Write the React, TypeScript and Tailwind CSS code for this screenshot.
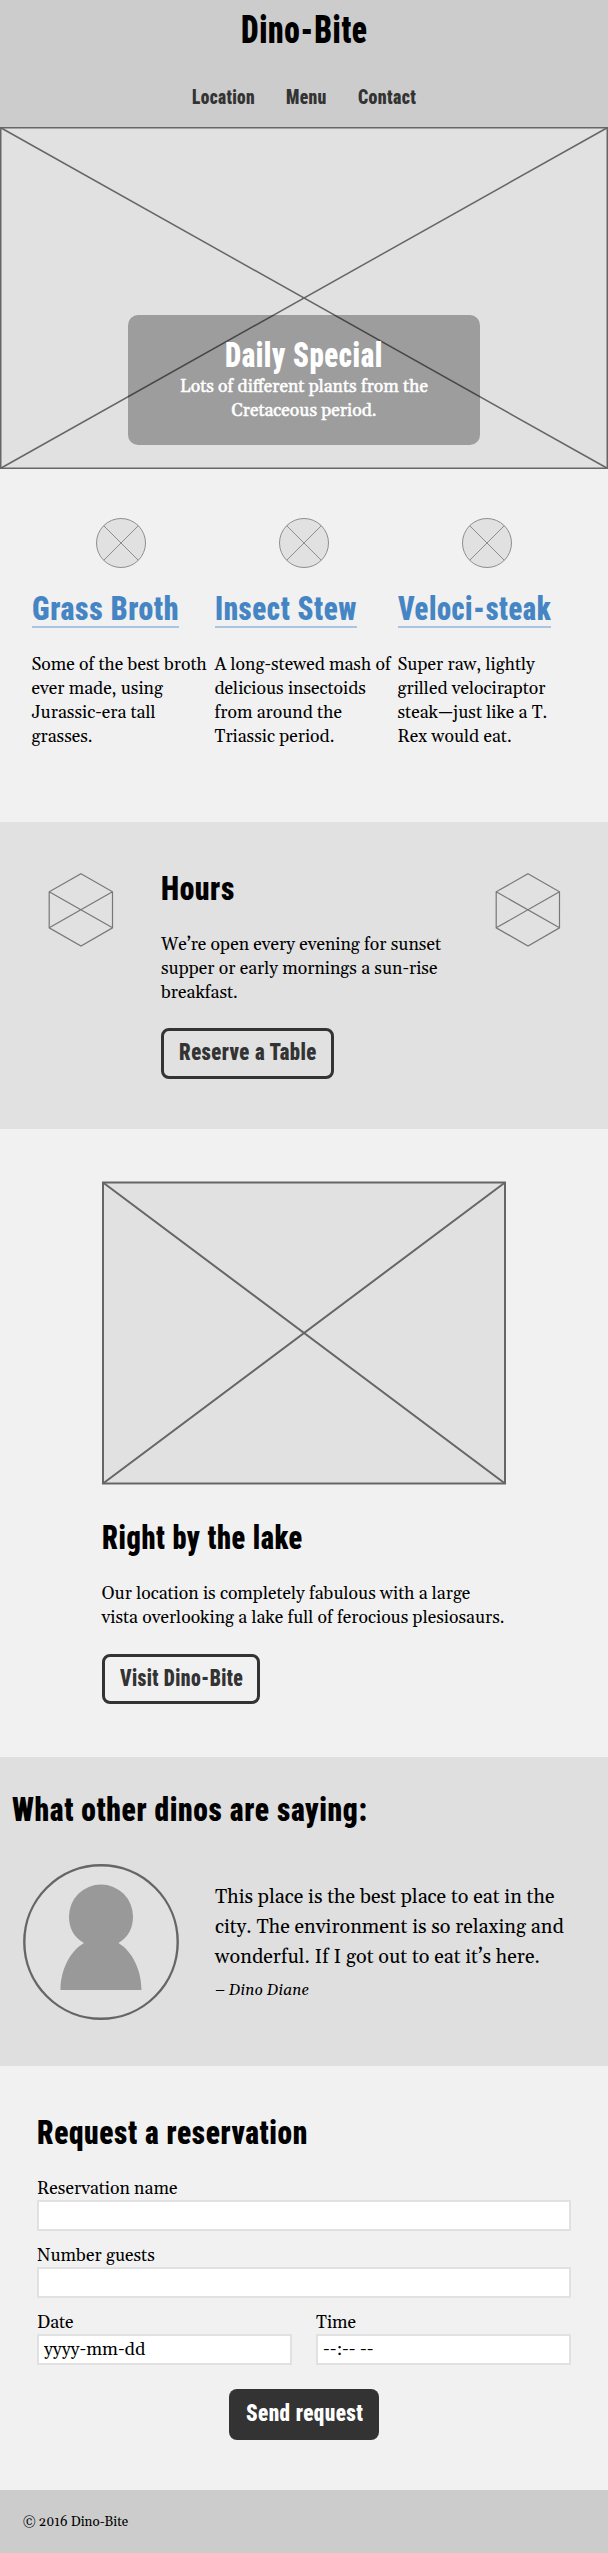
import { useLayoutEffect, useRef } from "react";
import type { ReactNode } from "react";

const display = "font-['Roboto_Condensed','Liberation_Sans',sans-serif] font-black tracking-[0.02em]";

/** Condenses a display line to fill the width of its box. */
function Condensed({ children, className }: { children: ReactNode; className: string }) {
  const box = useRef<HTMLSpanElement>(null);
  const text = useRef<HTMLSpanElement>(null);
  useLayoutEffect(() => {
    if (!box.current || !text.current) return;
    const ratio = box.current.clientWidth / text.current.offsetWidth;
    text.current.style.transform = `scaleX(${ratio})`;
  }, []);
  return (
    <span ref={box} className={`block whitespace-nowrap ${className}`}>
      <span ref={text} className="inline-block origin-left align-top">
        {children}
      </span>
    </span>
  );
}

function Heading({ children, width, className = "" }: { children: ReactNode; width: string; className?: string }) {
  return (
    <h2 className={`${display} text-[34px] leading-10 ${className}`}>
      <Condensed className={width}>{children}</Condensed>
    </h2>
  );
}

function Hexagon() {
  return (
    <svg className="mt-[5px] h-[74px] w-[66px] shrink-0" viewBox="0 0 66 74" fill="none" stroke="#777" strokeWidth="1.2">
      <path d="M33 .7 64.5 18.8v36L33 73 1.2 54.8v-36zM1.2 18.8l63.3 36M64.5 18.8 1.2 54.8" />
    </svg>
  );
}

const dishes = [
  { name: "Grass Broth", width: "w-[147px]", lines: ["Some of the best broth", "ever made, using", "Jurassic-era tall", "grasses."] },
  { name: "Insect Stew", width: "w-[142px]", lines: ["A long-stewed mash of", "delicious insectoids", "from around the", "Triassic period."] },
  { name: "Veloci-steak", width: "w-[153px]", lines: ["Super raw, lightly", "grilled velociraptor", "steak—just like a T.", "Rex would eat."] },
];

function Field({ label, value, className = "" }: { label: string; value?: string; className?: string }) {
  return (
    <label className={`block ${className}`}>
      <span className="block h-6 pt-px">{label}</span>
      <span className="block h-[31px] border-2 border-[#e1e1e1] bg-white pl-[5px] text-[18px] leading-[27px]">{value}</span>
    </label>
  );
}

export default function App() {
  return (
    <div className="w-[608px] bg-[#f1f1f1] font-['Gelasio','Liberation_Serif',serif] text-[17.6px] leading-6 text-black">
      <header className="flex h-[127px] flex-col items-center bg-[#ccc] pt-[3px]">
        <h1 className={`${display} text-[38px] leading-[54px]`}>
          <Condensed className="w-[127px]">Dino-Bite</Condensed>
        </h1>
        <nav className={`${display} mt-[26px] flex gap-[31px] text-[21px] leading-7 text-[#333]`}>
          <a><Condensed className="w-[63px]">Location</Condensed></a>
          <a><Condensed className="w-[41px]">Menu</Condensed></a>
          <a><Condensed className="w-[58px]">Contact</Condensed></a>
        </nav>
      </header>

      <section className="relative h-[342px] bg-[#e1e1e1]">
        <svg className="block h-[342px] w-[608px]" viewBox="0 0 608 342" fill="none" stroke="#666" strokeWidth="1.5">
          <rect x=".75" y=".75" width="606.5" height="340.5" />
          <path d="M.75.75 607.25 341.25M607.25.75.75 341.25" />
        </svg>
        <div className="absolute left-32 top-[188px] h-[130px] w-[352px] rounded-[10px] bg-black/30 pt-[23px] text-center text-white">
          <h2 className={`${display} flex justify-center text-[35px] leading-9`}>
            <Condensed className="w-[158px]">Daily Special</Condensed>
          </h2>
          <p className="pt-px [-webkit-text-stroke:0.5px_white]">
            Lots of different plants from the
            <br />
            Cretaceous period.
          </p>
        </div>
      </section>

      <section className="grid h-[353px] grid-cols-3 gap-[5px] px-8 pt-[49px]">
        {dishes.map((d) => (
          <article key={d.name}>
            <svg className="mx-auto block size-[50px]" viewBox="0 0 50 50" fill="#e1e1e1" stroke="#777" strokeWidth=".8">
              <circle cx="25" cy="25" r="24.5" />
              <path d="M7.7 7.7 42.3 42.3M42.3 7.7 7.7 42.3" />
            </svg>
            <h2 className={`${display} mt-5 text-[34px] leading-10 text-[#4585c4]`}>
              <Condensed className={`${d.width} h-10 border-b-2 border-[#a9c5e1]`}>{d.name}</Condensed>
            </h2>
            <p className="-ml-[0.5px] mt-[25px] whitespace-nowrap">
              {d.lines.map((l) => (
                <span key={l} className="block">{l}</span>
              ))}
            </p>
          </article>
        ))}
      </section>

      <section className="flex h-[307px] bg-[#e1e1e1] pl-12 pt-[46px]">
        <Hexagon />
        <div className="ml-[47px] w-[334px]">
          <Heading width="w-[74px]">Hours</Heading>
          <p className="mt-[25px] whitespace-nowrap">
            We’re open every evening for sunset
            <br />
            supper or early mornings a sun-rise
            <br />
            breakfast.
          </p>
          <button className={`${display} mt-[23px] block h-[51px] w-[173px] rounded-lg border-3 border-[#333] pb-[3px] pl-[15px] text-left text-[24px] leading-[42px] text-[#333]`}>
            <Condensed className="w-[138px]">Reserve a Table</Condensed>
          </button>
        </div>
        <Hexagon />
      </section>

      <section className="h-[628px] px-[102px] pt-[52px]">
        <svg className="block h-[304px] w-[404px]" viewBox="0 0 404 304" fill="#e1e1e1" stroke="#666" strokeWidth="2">
          <rect x="1" y="1.5" width="402" height="301" />
          <path d="M1 1.5 403 302.5M403 1.5 1 302.5" />
        </svg>
        <Heading width="w-[201px]" className="mt-8">Right by the lake</Heading>
        <p className="-ml-[0.5px] mt-[25px] whitespace-nowrap">
          Our location is completely fabulous with a large
          <br />
          vista overlooking a lake full of ferocious plesiosaurs.
        </p>
        <button className={`${display} mt-6 block h-[50px] w-[158px] rounded-lg border-3 border-[#333] pb-0.5 pl-[15px] text-left text-[24px] leading-[42px] text-[#333]`}>
          <Condensed className="w-[123px]">Visit Dino-Bite</Condensed>
        </button>
      </section>

      <section className="h-[309px] bg-[#dfdfdf] pt-8">
        <Heading width="w-[356px]" className="pl-3">What other dinos are saying:</Heading>
        <div className="mt-[35px] flex pl-[23px]">
          <svg className="size-[156px] shrink-0" viewBox="0 0 156 156">
            <circle cx="78" cy="78" r="76.7" fill="#e1e1e1" stroke="#666" strokeWidth="2.4" />
            <path d="M61 79C50 73 46 63 46 52.5a32 32 0 0 1 64 0C110 63 106 73 95.5 79 109 87 118.500 106 118.500 126H37.5C37.5 106 47 87 61 79z" fill="#999" />
          </svg>
          <blockquote className="ml-9 whitespace-nowrap pt-[19px] text-[19.8px] leading-[30px]">
            This place is the best place to eat in the
            <br />
            city. The environment is so relaxing and
            <br />
            wonderful. If I got out to eat it’s here.
            <cite className="mt-[5px] block text-[15.7px] leading-6">– Dino Diane</cite>
          </blockquote>
        </div>
      </section>

      <section className="h-[424px] px-[37px] pt-[46px]">
        <Heading width="w-[271px]">Request a reservation</Heading>
        <Field label="Reservation name" className="mt-6" />
        <Field label="Number guests" className="mt-3" />
        <div className="mt-3 flex gap-6">
          <Field label="Date" value="yyyy-mm-dd" className="w-[255px]" />
          <Field label="Time" value="--:-- --" className="w-[255px]" />
        </div>
        <button className={`${display} ml-48 mt-6 block h-[51px] w-[150px] rounded-lg bg-[#333] pb-[3px] pl-[17px] text-left text-[24px] leading-[48px] text-white`}>
          <Condensed className="w-[117px]">Send request</Condensed>
        </button>
      </section>

      <footer className="h-[63px] bg-[#ccc] pl-[23px] pt-[21px] text-[13.3px] oldstyle-nums">© 2016 Dino-Bite</footer>
    </div>
  );
}
